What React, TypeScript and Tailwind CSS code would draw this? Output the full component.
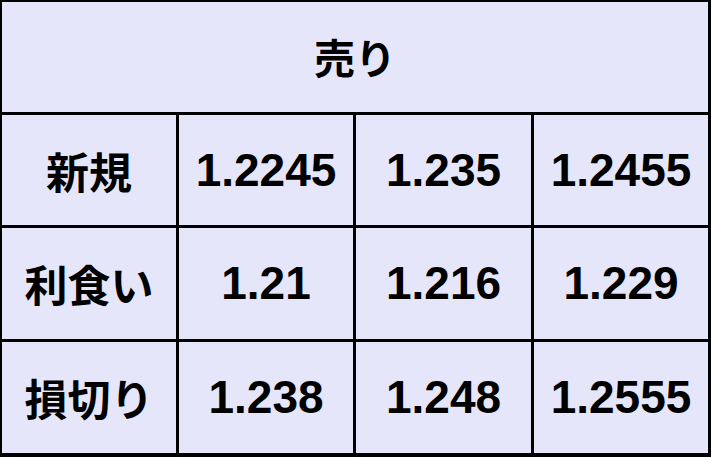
const rows = [
  { label: '新規', values: ['1.2245', '1.235', '1.2455'] },
  { label: '利食い', values: ['1.21', '1.216', '1.229'] },
  { label: '損切り', values: ['1.238', '1.248', '1.2555'] },
];

const jp = "font-['Noto_Sans_CJK_JP','Noto_Sans',sans-serif]";
const num = "font-['Liberation_Sans',Arial,sans-serif]";

export default function App() {
  return (
    <div className="w-[711px] h-[457px] bg-black pt-[2px] pl-[2px] pr-[3px] pb-[4px]">
      <div className="grid h-full grid-cols-[174px_174px_175px_174px] grid-rows-[110px_110px_111px_111px] gap-[3px]">
        <div className={`col-span-4 flex items-center justify-center bg-[#e6e6fa] text-[41px] font-bold text-black ${jp}`}>
          売り
        </div>
        {rows.map((row) => (
          <>
            <div
              key={row.label}
              className={`flex items-center justify-center bg-[#e6e6fa] text-[43px] font-bold text-black ${jp}`}
            >
              {row.label}
            </div>
            {row.values.map((v, i) => (
              <div
                key={row.label + i}
                className={`flex items-center justify-center bg-[#e6e6fa] text-[46px] font-bold text-black ${num}`}
              >
                {v}
              </div>
            ))}
          </>
        ))}
      </div>
    </div>
  );
}
